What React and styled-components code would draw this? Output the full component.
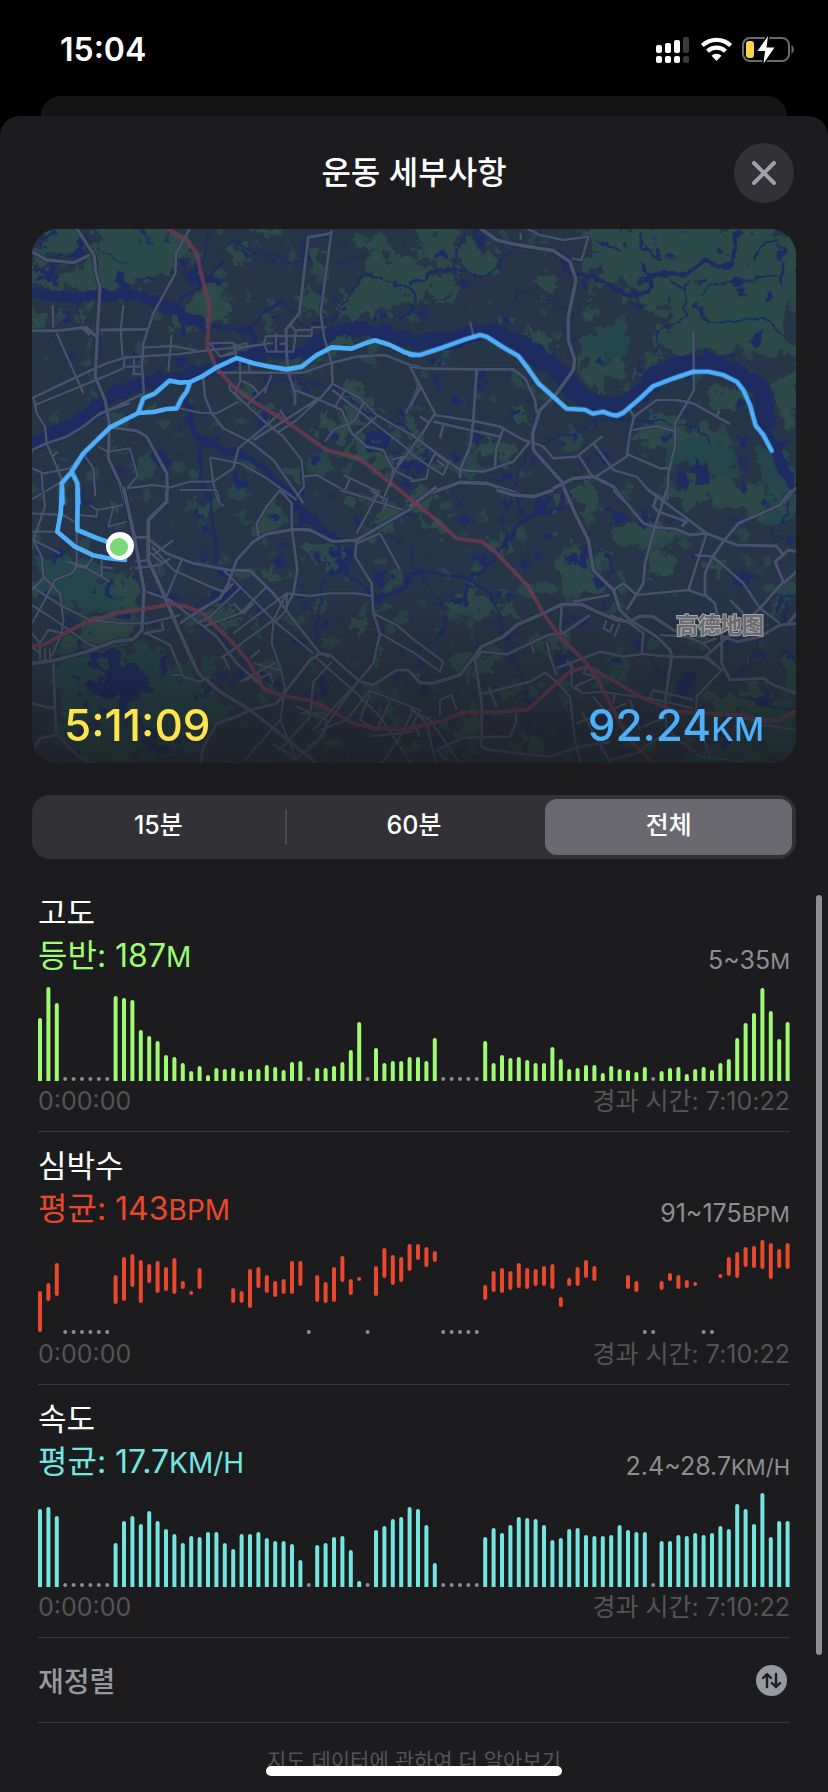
import { useState } from "react";
import styled, { createGlobalStyle } from "styled-components";

const GlobalStyle = createGlobalStyle`
  * {
    box-sizing: border-box;
  }
  body {
    margin: 0;
    background: #000;
    color: #fff;
    font-family: Inter, "Noto Sans CJK KR", sans-serif;
  }
  button {
    padding: 0;
    border: 0;
    color: inherit;
    font: inherit;
    cursor: pointer;
  }
`;

// one value per time slot, 0 = no data
const ELEVATION = [
  63, 94, 78, 0, 0, 0, 0, 0, 0, 85, 83, 81, 51, 45, 40, 26, 24, 18, 10, 15, 6,
  13, 12, 13, 10, 12, 12, 16, 14, 11, 19, 20, 0, 13, 13, 15, 19, 31, 59, 0, 33,
  18, 20, 20, 24, 24, 20, 43, 0, 0, 0, 0, 0, 40, 18, 26, 23, 24, 21, 18, 18, 34,
  22, 12, 13, 16, 16, 8, 15, 12, 11, 9, 14, 0, 10, 13, 14, 7, 12, 14, 11, 18,
  22, 43, 58, 68, 93, 70, 42, 59,
];

const SPEED = [
  78, 80, 71, 0, 0, 0, 0, 0, 0, 44, 66, 71, 63, 76, 66, 58, 53, 44, 51, 50, 55,
  55, 44, 38, 53, 53, 55, 49, 46, 46, 43, 27, 0, 42, 44, 50, 51, 37, 6, 0, 57,
  61, 68, 70, 80, 78, 62, 24, 0, 0, 0, 0, 0, 50, 59, 54, 62, 70, 69, 68, 62, 47,
  49, 58, 59, 52, 51, 51, 52, 62, 57, 55, 55, 0, 46, 46, 52, 51, 54, 52, 54, 61,
  58, 83, 78, 63, 94, 50, 66, 66,
];

// [slot, top, bottom]
const HEART = [
  [0, 51, 92], [1, 43, 61], [2, 23, 56], [9, 35, 64], [10, 17, 61],
  [11, 14, 47], [12, 20, 63], [13, 24, 43], [14, 21, 53], [15, 27, 51],
  [16, 18, 54], [17, 41, 49], [18, 51, 55], [19, 28, 49], [23, 48, 63],
  [24, 51, 63], [25, 29, 68], [26, 27, 48], [27, 35, 53], [28, 41, 57],
  [29, 39, 54], [30, 21, 54], [31, 21, 46], [33, 35, 62], [34, 42, 63],
  [35, 27, 62], [36, 16, 42], [37, 39, 55], [38, 37, 41], [40, 26, 56],
  [41, 8, 38], [42, 15, 45], [43, 17, 42], [44, 4, 31], [45, 4, 20],
  [46, 7, 27], [47, 11, 22], [53, 45, 60], [54, 31, 52], [55, 28, 53],
  [56, 31, 50], [57, 23, 48], [58, 28, 49], [59, 29, 46], [60, 26, 46],
  [61, 24, 49], [62, 57, 67], [63, 38, 46], [64, 27, 46], [65, 20, 38],
  [66, 26, 41], [70, 35, 49], [71, 41, 52], [74, 41, 50], [75, 33, 41],
  [76, 35, 49], [77, 40, 48], [78, 42, 46], [81, 34, 38], [82, 17, 36],
  [83, 12, 38], [84, 7, 27], [85, 6, 28], [86, 0, 29], [87, 3, 39],
  [88, 9, 28], [89, 3, 29],
];

const HEART_GAPS = [
  3, 4, 5, 6, 7, 8, 32, 39, 48, 49, 50, 51, 52, 72, 73, 79, 80,
];

const CHART_HEIGHT = 94;

const fromBase = (values) => ({
  bars: values.flatMap((v, i) =>
    v ? [[i, CHART_HEIGHT - v, CHART_HEIGHT + 4]] : []
  ),
  gaps: values.flatMap((v, i) => (v ? [] : [i])),
});

const METRICS = [
  {
    name: "고도",
    label: "등반: 187",
    unit: "M",
    range: "5~35",
    color: "#9efb73",
    ...fromBase(ELEVATION),
  },
  {
    name: "심박수",
    label: "평균: 143",
    unit: "BPM",
    range: "91~175",
    color: "#ea482d",
    bars: HEART,
    gaps: HEART_GAPS,
  },
  {
    name: "속도",
    label: "평균: 17.7",
    unit: "KM/H",
    range: "2.4~28.7",
    color: "#74e5e1",
    ...fromBase(SPEED),
  },
];

const PERIODS = ["15분", "60분", "전체"];

// The map is cut in four tiles, each with its own 1200x840 grid
const TILES = [
  {
    at: "translate(-12 -9) scale(0.33333)",
    green: [
      "M225 20L440 20L500 70L470 150L400 160L350 205L235 215L235 110Z",
      "M90 30L165 30L205 75L180 120L120 100L60 120L40 95Z",
      "M30 130L110 140L215 130L240 215L30 200Z",
      "M500 240L555 180L625 230L640 300L560 300L480 265Z",
      "M620 80L690 75L685 130L630 115Z",
      "M690 20L790 20L770 60L700 50Z",
      "M600 290L660 300L640 315L590 310Z",
      "M860 100L900 110L910 140L860 150Z",
      "M840 205L905 210L900 270L845 275Z",
      "M960 260L1010 180L1060 160L1200 200L1200 240L1110 260L1100 310L1040 270L980 310Z",
      "M1020 50L1080 60L1110 110L1200 100L1200 200L1100 190L1040 130Z",
      "M930 350L1020 330L1015 370L900 415Z",
      "M180 255L205 280L195 310L175 290Z",
      "M30 270L70 270L60 310L30 325Z",
      "M440 280L480 290L530 320L500 330L460 320Z",
      "M365 540L410 540L405 570L365 570Z",
      "M880 600L940 590L960 560L1000 560L1060 600L980 640L960 660L900 640Z",
      "M960 480L1020 500L1040 540L1090 560L1060 580L980 540Z",
      "M1000 660L1060 690L1110 700L1130 760L1060 740L1000 700L950 705Z",
      "M810 740L850 760L835 800L810 780Z",
      "M690 570L740 560L730 600Z",
      "M720 350L740 400L780 410L730 410L710 380Z",
      "M1110 590L1200 620L1200 650L1130 630Z",
    ],
    teal: [
      "M275 680L300 675L300 700L275 700Z",
      "M110 705L160 705L150 720L110 722Z",
      "M680 215L698 215L698 230L680 230Z",
      "M940 810L970 815L960 830Z",
    ],
    lakes: [
      "M60 130L105 140L100 190L60 180Z",
      "M500 140L570 130L540 200L510 180Z",
      "M1020 640L1070 620L1120 660L1080 690L1020 665Z",
      "M1150 720L1200 690L1200 760L1160 770Z",
      "M510 630L560 650L580 690L530 670Z",
    ],
    rivers: [
      ["M30 220C100 225 130 238 200 230S330 215 400 240S480 290 560 312", 32],
      ["M560 315C620 325 690 320 700 345S690 400 740 415", 14],
      ["M30 668C130 650 190 590 260 540S380 490 500 465S620 430 720 400S800 420 850 395S930 330 990 325S1120 360 1230 368", 42],
      ["M500 520C510 580 500 610 530 640S590 690 650 700S750 760 820 840", 18],
      ["M540 690C530 720 550 780 560 840", 12],
      ["M600 140C640 80 560 190 520 215S480 240 465 260", 8],
      ["M690 330C720 300 760 250 780 245S830 290 850 310S930 310 950 290", 7],
      ["M590 110C620 50 640 60 670 80S740 100 800 120S840 110 850 115", 5],
      ["M940 300C990 220 1010 170 1040 165S1130 200 1165 205S1200 300 1120 290", 6],
      ["M175 250C170 270 180 300 175 315", 4],
      ["M235 90C260 100 290 120 320 130M350 185C390 170 410 160 450 170", 4],
      ["M40 80C60 40 90 50 110 30", 12],
      ["M110 105C140 115 190 110 190 70S180 50 175 30", 6],
      ["M830 500C900 480 960 500 1020 560S1110 580 1180 640", 7],
      ["M570 30C555 60 560 100 545 140", 6],
      ["M940 130C980 120 1010 120 1060 90", 4],
    ],
    roads: [
      ["M36 95L80 120L160 128L210 105M170 25L222 105L228 160L240 200L232 340L226 470L255 540L268 610L265 715L300 790L316 850", 9],
      ["M36 332L110 332L200 322L228 350M210 345L190 325M240 330L384 328", 8],
      ["M98 255L100 325M110 340L190 520M310 255L302 330L308 410", 6],
      ["M510 25L468 100L466 160L400 280L370 370L366 440L372 520L320 545L235 585", 7],
      ["M36 535L150 480L260 430L320 412L480 402L570 390L680 380L740 372", 7],
      ["M45 555L240 475L310 445L315 412M315 440L365 440M342 415L342 462M335 462L365 462", 6],
      ["M365 383L460 378L530 392M455 345L445 455M565 370L640 368L648 400L600 410L570 370", 6],
      ["M600 410L680 380L680 368L640 380M645 370L650 420", 5],
      ["M40 530L50 580L75 620L80 670L110 740L125 780", 6],
      ["M36 690L80 670L140 650L190 620L240 580L330 550", 7],
      ["M36 745L70 760L150 745L190 700M65 760L70 840M36 838L125 785M190 700L220 745L226 830", 6],
      ["M235 680L262 695L330 685L353 768L318 808M36 690L36 700M95 710L115 695", 5],
      ["M270 622L350 632L380 650L440 760L445 850", 9],
      ["M318 805L400 795L450 802L510 785L580 785L640 745L655 685L740 615L780 580", 6],
      ["M935 30L902 280L912 350L935 430L938 490L905 530L780 610L700 660", 7],
      ["M935 40L865 52L838 280L798 328L800 400L805 460L825 520L825 555", 8],
      ["M738 348L875 348L875 322L920 322M738 348L732 370L742 395L820 395L828 335L810 312M768 338L768 395M740 370L760 370M780 372L795 370M830 330L870 330", 6],
      ["M590 458L850 458L930 430L1010 410L1095 405L1170 435L1200 440", 7],
      ["M550 475L555 530L575 580L610 625L690 665L760 720L830 820L850 850", 7],
      ["M480 565L540 578L590 580L655 545M628 490L630 510L740 610L790 650L845 720L852 800L830 830", 6],
      ["M660 410L660 480L700 500L715 520M660 485L645 520L680 555L740 500L755 465M685 430L690 455M740 500L735 520", 6],
      ["M570 712L660 730L740 775L830 840M570 715L580 790L595 850M640 745L655 685", 6],
      ["M825 510L900 540L965 570L995 640L1040 680L1090 690L1120 750L1110 800", 7],
      ["M935 490L1020 535L1070 585L1200 660M938 510L1000 560L1180 700M975 510L945 560M1030 550L1005 600L990 610M1070 590L1000 650M770 640L830 600L905 530M780 570L800 600", 6],
      ["M990 610L940 630L915 665M1200 655L1125 750L1085 850M1130 735L1150 710L1115 720", 6],
      ["M850 770L890 765L970 810L1070 840M970 765L1075 815M990 775L975 810M1060 840L1070 815", 6],
      ["M1170 435L1195 500L1158 580M1120 750L1190 785", 6],
    ],
    rails: ["M440 25L500 60L530 100L548 180L568 250L562 380L590 445L640 500L700 545L800 605L920 690L1010 712L1050 740L1200 860"],
    route: [
      "M1180 405L1150 395L1110 375L1065 361L1035 370L995 386L935 382L890 405L845 440L800 448L750 440L700 430L650 414L590 442L545 470L510 486L480 488L448 482L405 520L370 535L355 577",
      "M510 486L500 515L485 535L470 565L440 567L400 576L355 579L270 622L190 700L155 755L125 790L128 850",
      "M155 755L172 790L175 850",
    ],
  },
  {
    at: "translate(378 -9) scale(0.33333)",
    green: [
      "M140 60L200 80L270 90L240 160L160 160L130 120Z",
      "M30 20L160 20L140 130L60 120L20 80Z",
      "M0 150L100 150L160 190L140 230L40 220L0 240Z",
      "M530 20L1170 20L1170 190L1120 280L1170 420L1060 390L960 400L880 400L760 390L740 340L800 290L700 270L650 210L560 170L500 170L540 110Z",
      "M510 350L560 320L650 310L650 400L610 480L560 530L520 490Z",
      "M700 430L750 410L740 440L680 490L660 500Z",
      "M330 330L400 320L420 390L370 380Z",
      "M400 420L440 400L470 440L440 450Z",
      "M250 300L310 310L290 330L240 320Z",
      "M1100 480L1170 430L1170 560L1130 640L1100 560Z",
      "M860 480L960 490L1000 530L980 580L900 540Z",
      "M700 600L780 590L860 610L960 680L960 740L880 700L760 690L670 660Z",
      "M490 800L560 780L540 840L480 840Z",
      "M290 540L350 560L370 600L320 600Z",
      "M180 620L240 650L320 670L300 720L220 700Z",
      "M0 660L50 640L40 700L0 720Z",
      "M800 800L940 760L1000 800L990 850L800 850Z",
      "M520 265L570 260L570 285L530 285Z",
      "M380 160L440 165L430 200L390 195Z",
    ],
    teal: [
      "M760 650L860 660L980 700L960 780L860 740L760 720Z",
      "M1040 700L1120 700L1160 800L1160 850L1060 850Z",
      "M560 320L650 315L650 400L580 430L520 400Z",
    ],
    lakes: [
      "M270 740L300 750L310 800L260 790Z",
      "M850 690L880 740L890 800L820 780Z",
      "M0 720L40 730L40 770L0 770Z",
      "M60 420L85 400L85 440L60 440Z",
      "M300 570L330 570L330 600L310 600Z",
    ],
    rivers: [
      ["M0 372C60 355 120 370 180 345S260 330 300 360", 48],
      ["M300 360C360 395 410 420 450 460S500 540 560 555S650 560 700 510", 58],
      ["M700 510C750 440 820 435 880 430S980 470 1030 490S1050 560 1065 630", 58],
      ["M1065 620C1090 680 1110 740 1165 820", 28],
      ["M0 195C50 180 50 150 100 145S200 175 235 165S280 110 305 90", 8],
      ["M170 40C150 90 120 110 135 155", 7],
      ["M460 120C460 170 520 155 550 170S600 210 670 222S700 170 740 165S810 180 850 150S870 115 930 140S960 60 990 30", 13],
      ["M830 180C820 220 830 270 825 290S740 310 740 350S740 400 750 410M780 180L830 215", 5],
      ["M870 230C900 180 980 190 1040 175S1110 160 1115 200", 5],
      ["M850 250C890 270 870 300 900 305S980 300 1060 300L1120 350", 6],
      ["M400 670C440 640 490 660 530 620S640 600 720 605S860 600 900 670", 5],
      ["M340 210L400 235L470 275M0 280L130 220", 4],
      ["M350 700C320 760 310 800 320 850", 6],
      ["M1030 120L1060 70L1100 60M1120 130L1110 190M700 40L690 80L750 120", 8],
      ["M560 60L600 75L630 90M490 280L490 300", 6],
    ],
    roads: [
      ["M210 25L260 60L310 72L430 92L480 125L498 180L475 290L475 360L494 420L490 450L440 520L390 570L368 640L370 690L455 785L475 850", 10],
      ["M350 25L390 45L460 60L535 50L515 120L485 115M332 40L332 60M180 305L190 345", 6],
      ["M0 440L40 445L200 448L310 448L345 475L375 540L380 580", 7],
      ["M0 440L75 580L50 620L0 690M30 505L0 560M75 585L200 605L270 620L340 660L360 665M70 605L180 630L270 650M100 615L90 655M30 590L60 610", 7],
      ["M200 448L190 600L180 680L150 750L150 775", 8],
      ["M280 625L258 690L255 740M0 640L80 700L150 750L220 755L310 725L360 665", 7],
      ["M0 700L60 740L100 765L115 730L75 700L55 740M80 720L105 740M0 785L50 775L55 745", 6],
      ["M0 860L60 820L150 787L230 790L350 830L400 820L490 775L550 770L610 800L650 850", 10],
      ["M375 670L400 680L430 715L500 710L578 648M505 705L550 775M550 670L610 750L680 770L715 810L770 840M550 775L650 710L660 640L672 590L660 570", 7],
      ["M672 590L740 540L800 540L850 550L960 612M920 590L928 572M850 335L852 510L830 550L795 610L795 680L775 760L772 840M668 630L740 618L800 635M650 702L750 745L775 745M735 850L740 820", 7],
      ["M1160 800L1120 850", 8],
    ],
    rails: [],
    route: [
      "M0 403L30 405L90 385L160 360L210 345L230 350L280 382L325 408L350 440L385 490L430 530L470 566L525 569L548 581L580 575L600 583L620 587L640 578L690 535L730 498L790 475L850 455L895 455L940 465L980 485L1000 510L1020 555L1037 617L1060 645L1085 692",
    ],
  },
  {
    at: "translate(-12 261) scale(0.33333)",
    green: [
      "M110 440L230 400L290 330L340 360L360 430L290 460L110 480Z",
      "M290 250L350 240L360 350L290 340L270 290Z",
      "M530 30L590 50L570 100L535 90Z",
      "M720 60L790 50L780 120L700 150Z",
      "M860 160L960 150L950 240L880 220Z",
      "M1050 60L1200 30L1180 90L1050 130Z",
      "M740 240L790 240L780 275L730 265Z",
      "M550 330L640 350L650 410L600 400Z",
      "M990 410L1040 410L1030 440L990 430Z",
      "M1050 480L1090 470L1080 510L1050 510Z",
      "M970 30L1020 20L1040 60L980 50Z",
      "M250 30L300 40L290 60L260 60Z",
      "M1150 760L1200 740L1200 790L1160 790Z",
      "M930 740L970 750L960 780L920 770Z",
      "M1080 640L1130 650L1120 690L1080 680Z",
    ],
    teal: [
      "M60 200L140 190L290 260L280 350L190 380L110 330L60 270Z",
      "M110 480L240 470L400 470L480 530L500 570L640 650L560 700L540 810L200 810L110 740Z",
      "M620 80L700 75L690 100L630 95Z",
      "M540 100L560 100L565 125L545 125Z",
      "M1080 330L1110 330L1090 365L1070 360Z",
      "M530 375L555 380L545 400L530 395Z",
      "M675 375L700 370L710 400L690 415L670 400Z",
      "M540 510L600 520L590 560L540 550Z",
      "M750 770L800 770L810 800L770 810Z",
    ],
    lakes: [
      "M220 490L300 480L330 520L390 540L380 600L340 640L350 700L290 660L270 610L210 620L190 580L270 560Z",
      "M340 680L390 700L440 790L400 800L350 750Z",
      "M240 280L280 280L275 310L245 310Z",
      "M890 570L910 570L915 630L890 620Z",
      "M940 180L985 170L990 250L940 240Z",
      "M200 690L250 700L240 740L200 720Z",
      "M530 590L545 600L550 640L535 640Z",
      "M630 280L655 280L650 320L630 310Z",
    ],
    rivers: [
      ["M800 0C830 50 850 80 880 100S940 140 955 160", 22],
      ["M960 140C950 200 960 240 1000 270S1060 320 1100 315S1150 300 1160 260", 12],
      ["M575 0C560 60 590 140 590 200S610 240 640 280S600 320 550 350", 9],
      ["M910 260C910 330 890 370 885 440L880 490", 6],
      ["M590 400C610 440 630 480 660 510S620 560 640 590", 6],
      ["M1160 280L1200 240", 8],
    ],
    roads: [
      ["M310 -10L345 150L372 300L366 420L340 448L280 455L200 485L100 512L36 520", 10],
      ["M440 0L440 35L385 90L385 210L430 310L480 430L535 550L600 605L690 660L760 715L890 820", 11],
      ["M345 142L380 142L440 190L520 220L625 240L690 242L760 310L840 415L900 490L930 495L1020 575L1060 585L1130 540L1160 540L1200 560", 8],
      ["M380 305L450 330L500 370L590 440L650 520L740 600", 7],
      ["M480 400L540 360L600 325L625 280L650 210L700 155L740 132L820 118L870 120L940 155L1010 150L1200 40", 9],
      ["M400 195L460 150M395 170L460 240L570 290L610 305M485 210L440 320M380 180L430 220M345 235L420 225L450 205M345 215L390 210", 6],
      ["M610 240L760 390L880 490M740 290L660 370L550 410M640 280L600 320M665 290L570 380L530 400M800 310L640 430M800 310L760 390L610 500L630 540M640 340L670 370L700 340", 6],
      ["M800 310L870 318L930 310L1010 310L1055 318M800 310L800 360L760 400L755 460L780 530L795 590L780 700", 6],
      ["M780 0L740 50L710 100L715 140M780 0L815 40L815 110L832 240L820 310L800 350", 7],
      ["M1010 150L1005 200L1055 280L1060 370L1080 430L1060 520L1010 580L930 690L890 760L820 810", 7],
      ["M1080 130L1140 240M1060 370L1130 405L1200 465M1080 430L1200 500M1010 160L1080 130", 6],
      ["M1010 130L1080 0M960 0L1150 60M1050 0L1100 30L1090 60", 6],
      ["M480 0L590 0L600 40L612 48M210 45L230 60L310 45M230 55L230 80L180 75M280 50L265 110L320 95", 5],
      ["M36 70L130 75L170 100L170 230L155 250L105 270L85 310L36 400M36 125L110 125M70 0L75 50L40 150L65 200L70 260L120 310L130 390L125 430L95 500", 6],
      ["M36 290L120 345L210 390L310 400L380 400L480 375M36 345L90 380L210 465L230 470M36 300L70 265M40 150L120 190M220 200L200 230L140 215M245 190L245 260M160 225L200 235L270 275M240 230L280 235", 6],
      ["M36 470L60 490M36 430L60 460L85 420L130 430M60 460L60 510M75 475L75 510M90 475L90 510", 6],
      ["M380 430L450 465L490 560L540 575L570 560M370 430L430 420L425 395M455 555L490 555", 7],
      ["M100 520L108 730L170 795L225 830M36 640L80 652L105 652M40 780L60 745L105 735", 7],
      ["M540 830L550 770L590 700L650 680L690 660L770 640L800 600L870 510L900 490L930 500", 9],
      ["M600 505L640 480M660 575L770 515M700 520L780 540M690 505L720 480M700 575L750 550L760 580M715 550L725 585M665 575L700 560", 6],
      ["M885 500L1010 610L1080 680L1180 830M935 515L880 575L870 680L780 780L760 760M1000 590L880 720M1050 600L980 690L900 720M1045 600L1200 660L1180 700L1200 740M1110 635L1070 720L1020 690L1050 610", 6],
      ["M830 650L920 690L910 740L860 770M780 690L830 810M840 670L920 670M1050 740L1180 725M670 815L780 690M770 770L820 800M1080 830L1140 740L1180 660", 6],
    ],
    rails: ["M36 468L70 465L130 432L200 395L290 370L380 355L460 342L500 350L545 368L640 460L690 520L730 598L790 618L870 632L930 660L1000 700L1060 715L1150 718L1200 710"],
    route: [
      "M126 0L122 70L112 125L165 170L220 196L260 204L315 210",
      "M173 0L172 120L230 144L290 165",
    ],
  },
  {
    at: "translate(378 261) scale(0.33333)",
    green: [
      "M430 0L560 0L560 50L430 50Z",
      "M0 0L100 0L60 50L0 60Z",
      "M420 210L490 180L560 170L600 250L560 310L480 300L430 250Z",
      "M600 110L700 90L720 60L800 160L700 170L600 150Z",
      "M720 200L780 190L770 240L710 280Z",
      "M110 340L210 320L270 360L240 390L130 380Z",
      "M280 340L330 330L320 390L280 380Z",
      "M150 270L200 280L190 310L160 300Z",
      "M200 490L250 500L240 550L200 550Z",
      "M940 0L1170 0L1170 40L1100 80L980 60Z",
      "M890 200L940 230L930 260L900 240Z",
      "M430 450L480 450L470 500L430 480Z",
      "M1000 490L1060 480L1050 520L1000 520Z",
      "M880 620L1000 590L1090 610L1090 660L900 670Z",
      "M150 670L210 680L200 740L150 740Z",
      "M320 740L380 745L380 800L300 800Z",
      "M130 500L190 490L180 560L130 550Z",
      "M1090 330L1130 340L1110 370L1090 360Z",
      "M260 150L300 120L290 180L260 190Z",
      "M20 60L120 90L110 120L60 110Z",
    ],
    teal: [
      "M540 540L640 515L640 560L580 580Z",
      "M1060 60L1130 60L1130 90L1080 100Z",
      "M1030 650L1170 640L1170 830L820 830L850 780L960 740Z",
      "M480 620L510 620L505 645L485 640Z",
      "M150 780L210 780L210 810L160 810Z",
    ],
    lakes: [
      "M820 540L850 545L845 590L820 580Z",
      "M600 70L615 60L640 70L640 90L620 95L600 85Z",
      "M120 310L180 300L170 335L130 330Z",
      "M1110 480L1150 470L1150 510L1110 500Z",
      "M450 200L475 195L475 215L455 215Z",
      "M270 70L295 60L290 100L275 100Z",
      "M370 70L420 65L410 90L370 90Z",
    ],
    rivers: [
      ["M0 245C60 250 140 250 190 275S270 360 275 420S340 540 355 620S350 730 345 790", 8],
      ["M190 270C220 230 270 190 290 160S320 100 350 85S420 60 470 60", 9],
      ["M330 80L325 30M290 60L285 0", 6],
      ["M560 180C600 170 600 220 600 260", 5],
      ["M40 260C70 320 110 350 110 400S50 450 20 500M0 180L20 240", 5],
      ["M1160 310C1110 320 1100 350 1090 380S1040 450 1030 500S960 540 950 570", 6],
      ["M1130 30L1130 80L1090 120L1100 160", 6],
      ["M1090 360L1120 330L1130 360L1110 400", 5],
      ["M700 490C740 520 740 560 720 580", 4],
      ["M960 600C1000 620 1040 640 1100 660L1160 650", 6],
    ],
    roads: [
      ["M0 50L80 -10M260 0L310 15L370 20L430 0M460 -10L500 80L535 150L550 240L610 300L630 360L660 390", 10],
      ["M0 545L30 578L70 580L150 555L215 470L280 440L320 405L400 370L455 343L515 343L560 365L620 390L660 395L690 378L730 380L790 420L870 440", 10],
      ["M610 0L650 40L700 100L740 112L800 118L840 135L890 130M715 0L830 85L890 130L980 165L1100 168L1120 195L1135 180L1160 185M1120 195L1095 215L1120 275L1045 360L920 470L885 500", 8],
      ["M740 20L730 50L745 65L830 95L815 110M770 0L735 110L705 220L700 280L650 360M1145 0L1110 45L985 100L940 155L905 205L885 250L885 315L915 340L935 440L935 520L960 570L1060 565L1090 585L1160 610", 8],
      ["M890 130L835 300L680 315L640 280L610 300M835 300L885 318M855 195L910 200L1000 280L1050 355L1110 400M960 330L1000 370M980 350L985 345M600 315L490 335", 7],
      ["M1160 400L1110 405L1050 440L980 455L940 440M1160 245L1120 280M1160 370L1130 405", 8],
      ["M660 390L740 440L780 480L785 500L770 600L765 650", 9],
      ["M540 375L460 430L415 435L290 493L215 485L195 510L215 640L215 770L240 780L420 800L510 770L600 755", 8],
      ["M455 350L450 420L470 440M410 455L420 500L440 555M440 535L570 485L640 500L700 492L780 500L885 502L935 540M695 490L700 430L660 400L600 375M750 435L830 440L880 460L920 445", 7],
      ["M365 465L372 490M590 390L580 415L600 425L610 400M630 400L612 440", 6],
      ["M215 612L360 575L405 548L440 575L480 620L495 750L520 850M160 743L300 740L318 700L318 670M235 590L260 650", 7],
      ["M90 630L125 615L140 660M90 630L90 680M0 650L50 700L80 830M0 660L60 690L150 820M160 743L80 780L110 810M50 690L60 680", 6],
      ["M485 520L485 590L520 610L570 605L720 625L850 655M520 610L495 590L560 560L580 605M470 510L490 540M560 560L520 550L530 530M600 680L550 620M690 720L660 630M610 640L615 610", 6],
      ["M890 500L935 540L860 620L858 660L880 740L900 800M720 625L730 600L850 630M765 650L770 720L870 800L1000 815M500 700L650 640M515 665L620 850M700 710L770 680M570 770L600 810M880 460L900 480", 6],
      ["M0 440L100 515L90 545L0 480", 6],
      ["M990 680L1060 705L1160 720M600 810L680 790L750 740", 7],
    ],
    rails: [
      "M0 28L60 75L140 145L215 155L255 185L355 290L400 370L450 440L530 520L570 580L610 660L660 750L730 820",
      "M0 715L90 695L160 667L260 667L355 658L440 580L480 545L530 530L600 565L700 625L800 665L990 675L1060 692L1110 690L1160 660",
    ],
    route: [],
  },
];

const ActivityMap = () => (
  <MapArt
    viewBox="0 0 764 534"
    preserveAspectRatio="xMidYMid slice"
    aria-hidden="true"
  >
    <defs>
      <filter
        id="land"
        x="-5%" y="-5%" width="110%" height="110%"
        colorInterpolationFilters="sRGB"
      >
        <feTurbulence
          type="fractalNoise"
          baseFrequency="0.06"
          numOctaves="4"
          seed="7"
        />
        <feDisplacementMap
          in="SourceGraphic"
          scale="38"
          xChannelSelector="R"
          yChannelSelector="G"
        />
      </filter>
      <filter
        id="shore"
        x="-5%" y="-5%" width="110%" height="110%"
        colorInterpolationFilters="sRGB"
      >
        <feTurbulence
          type="fractalNoise"
          baseFrequency="0.08"
          numOctaves="3"
          seed="3"
        />
        <feDisplacementMap
          in="SourceGraphic"
          scale="10"
          xChannelSelector="R"
          yChannelSelector="G"
        />
      </filter>
      {/* small ponds and woods scattered over the land */}
      <filter
        id="ponds"
        x="0" y="0" width="100%" height="100%"
        colorInterpolationFilters="sRGB"
      >
        <feTurbulence
          type="fractalNoise"
          baseFrequency="0.05"
          numOctaves="4"
          seed="12"
        />
        <feColorMatrix values="0 0 0 0 0.11  0 0 0 0 0.17  0 0 0 0 0.38  14 0 0 0 -9.6" />
      </filter>
      <filter
        id="woods"
        x="0" y="0" width="100%" height="100%"
        colorInterpolationFilters="sRGB"
      >
        <feTurbulence
          type="fractalNoise"
          baseFrequency="0.04"
          numOctaves="4"
          seed="31"
        />
        <feColorMatrix values="0 0 0 0 0.16  0 0 0 0 0.28  0 0 0 0 0.29  14 0 0 0 -8.9" />
      </filter>
      <linearGradient id="fade" x1="0" y1="0" x2="0" y2="1">
        <stop offset="0" stopColor="#1c1c1e" stopOpacity="0" />
        <stop offset="1" stopColor="#1c1c1e" stopOpacity="0.7" />
      </linearGradient>
    </defs>
    <rect width="764" height="534" fill="#273549" />
    <rect width="764" height="534" filter="url(#woods)" />
    <g filter="url(#land)">
      {TILES.map((tile) => (
        <g key={tile.at} transform={tile.at}>
          <path d={tile.green.join("")} fill="#2d4a4a" />
          <path d={tile.teal.join("")} fill="#23474d" />
          <path d={tile.lakes.join("")} fill="#1c2b60" />
        </g>
      ))}
    </g>
    <rect width="764" height="534" filter="url(#ponds)" />
    <g filter="url(#shore)" fill="none" stroke="#1c2b60">
      {TILES.map((tile) => (
        <g key={tile.at} transform={tile.at}>
          {tile.rivers.map(([d, width]) => (
            <path key={d} d={d} strokeWidth={width} />
          ))}
        </g>
      ))}
    </g>
    <g fill="none" strokeLinejoin="round">
      {TILES.map((tile) => (
        <g key={tile.at} transform={tile.at}>
          {tile.roads.map(([d, width]) => (
            <path
              key={d}
              d={d}
              stroke="#222d40"
              strokeWidth={width > 8 ? width + 6 : width + 3}
            />
          ))}
          {tile.roads.map(([d, width]) => (
            <path key={d} d={d} stroke="#47536e" strokeWidth={width + 1} />
          ))}
        </g>
      ))}
      {TILES.map((tile) => (
        <g key={tile.at} transform={tile.at}>
          {tile.rails.map((d) => (
            <g key={d}>
              <path d={d} stroke="#733f54" strokeWidth="11" opacity="0.85" />
              <path d={d} stroke="#57304a" strokeWidth="2" />
            </g>
          ))}
        </g>
      ))}
    </g>
    <rect y="364" width="764" height="170" fill="url(#fade)" />
    <g fill="none" stroke="#4fb0fa" strokeLinecap="round" strokeLinejoin="round">
      {TILES.map((tile) => (
        <g key={tile.at} transform={tile.at}>
          {tile.route.map((d) => (
            <path key={d} d={d} strokeWidth="14" />
          ))}
        </g>
      ))}
    </g>
    <circle cx="88" cy="317" r="14" fill="#fff" />
    <circle cx="87" cy="318" r="9" fill="#78d975" />
  </MapArt>
);

const StatusIcons = () => (
  <svg width="140" height="28" viewBox="0 0 140 28" aria-hidden="true">
    <g fill="#fff">
      <rect x="1" y="9" width="6" height="8" rx="2" />
      <rect x="10" y="7" width="6" height="10" rx="2" />
      <rect x="19" y="4" width="6" height="13" rx="2" />
      <rect x="28" y="1" width="6" height="16" rx="2" fill="#3a3a3c" />
      <rect x="1" y="20" width="6" height="7" rx="2" />
      <rect x="10" y="20" width="6" height="7" rx="2" />
      <rect x="19" y="20" width="6" height="7" rx="2" />
      <rect x="28" y="20" width="6" height="7" rx="2" fill="#3a3a3c" />
      <path d="M61.500 25l-5-5.200a7.200 7.200 0 0 1 10 0z" />
    </g>
    <g fill="none" stroke="#fff" strokeWidth="4.200">
      <path d="M47.300 9.500a20.500 20.500 0 0 1 28.400 0" />
      <path d="M52.500 15.300a13 13 0 0 1 18 0" />
    </g>
    <rect
      x="88" y="2" width="46" height="23" rx="7"
      fill="none" stroke="#6b6b6e" strokeWidth="2"
    />
    <path d="M136.500 9.500c3 1 3 7 0 8z" fill="#6b6b6e" />
    <rect x="91" y="5" width="8" height="17" rx="3" fill="#f7d64a" />
    <path
      d="M113 0L102.500 15H110L108.500 27.500L119.500 11.500H111.500Z"
      fill="#fff" stroke="#000" strokeWidth="3" paintOrder="stroke"
      strokeLinejoin="round"
    />
  </svg>
);

const Chart = ({ bars, gaps, color, name }) => (
  <ChartArt viewBox={`0 0 752 ${CHART_HEIGHT}`} role="img" aria-label={name}>
    {bars.map(([slot, top, bottom]) => (
      <rect
        key={slot}
        x={slot * 8.4}
        y={top}
        width="4"
        height={bottom - top}
        rx="2"
        fill={color}
      />
    ))}
    {gaps.map((slot) => (
      <circle key={slot} cx={slot * 8.4 + 2} cy="92" r="2" fill="#8e8e90" />
    ))}
  </ChartArt>
);

const Metric = ({ name, label, unit, range, color, bars, gaps }) => (
  <Panel>
    <PanelTitle>{name}</PanelTitle>
    <Summary>
      <Value $color={color}>
        {label}
        <Unit $size={28}>{unit}</Unit>
      </Value>
      <Range>
        {range}
        <Unit $size={22}>{unit}</Unit>
      </Range>
    </Summary>
    <Chart bars={bars} gaps={gaps} color={color} name={name} />
    <Axis>
      <span>0:00:00</span>
      <span>경과 시간: 7:10:22</span>
    </Axis>
  </Panel>
);

const App = () => {
  const [period, setPeriod] = useState("전체");

  return (
    <Screen>
      <GlobalStyle />
      <StatusBar>
        <Clock>15:04</Clock>
        <StatusIcons />
      </StatusBar>
      <BackSheet />
      <Sheet>
        <Header>
          <Title>운동 세부사항</Title>
          <CloseButton aria-label="닫기">
            <svg width="24" height="24" viewBox="0 0 24 24" aria-hidden="true">
              <path
                d="M2 2L22 22M22 2L2 22"
                stroke="#a0a0a7"
                strokeWidth="4"
                strokeLinecap="round"
              />
            </svg>
          </CloseButton>
        </Header>
        <MapCard>
          <ActivityMap />
          <Watermark>高德地图</Watermark>
          <MapStats>
            <Stat $color="#fbe74d">5:11:09</Stat>
            <Stat $color="#4fb0fa">
              92.24<Unit $size={33}>KM</Unit>
            </Stat>
          </MapStats>
        </MapCard>
        <Segments>
          {PERIODS.map((p) => (
            <Segment
              key={p}
              $active={p === period}
              aria-pressed={p === period}
              onClick={() => setPeriod(p)}
            >
              {p}
            </Segment>
          ))}
        </Segments>
        <Metrics>
          {METRICS.map((metric) => (
            <Metric key={metric.name} {...metric} />
          ))}
          <ScrollThumb />
        </Metrics>
        <ReorderButton>
          재정렬
          <svg width="31" height="31" viewBox="0 0 31 31" aria-hidden="true">
            <circle cx="15.500" cy="15.500" r="15.500" fill="#98989f" />
            <path
              d="M11 22V9.500M7 13L11 9L15 13M20 9V21.500M16 18L20 22L24 18"
              fill="none"
              stroke="#1c1c1e"
              strokeWidth="2.400"
              strokeLinecap="round"
              strokeLinejoin="round"
            />
          </svg>
        </ReorderButton>
        <MapLink href="#map-data">지도 데이터에 관하여 더 알아보기</MapLink>
      </Sheet>
      <HomeIndicator />
    </Screen>
  );
};

const Screen = styled.div`
  position: relative;
  display: flex;
  flex-direction: column;
  min-height: 100vh;
  overflow: hidden;
`;

const StatusBar = styled.div`
  display: flex;
  align-items: center;
  justify-content: space-between;
  height: 96px;
  padding: 4px 33px 0 60px;
`;

const Clock = styled.span`
  font-size: 32px;
  font-weight: 600;
  line-height: 40px;
`;

const BackSheet = styled.div`
  height: 20px;
  margin: 0 41px;
  border-radius: 20px 20px 0 0;
  background: #141414;
`;

const Sheet = styled.main`
  display: flex;
  flex: 1;
  flex-direction: column;
  border-radius: 20px 20px 0 0;
  background: #1c1c1e;
`;

const Header = styled.header`
  display: grid;
  grid-template-columns: 60px 1fr 60px;
  align-items: center;
  padding: 27px 34px 26px;
`;

const Title = styled.h1`
  grid-column: 2;
  margin: 0;
  font-size: 32px;
  font-weight: 500;
  line-height: 40px;
  text-align: center;
`;

const CloseButton = styled.button`
  display: flex;
  align-items: center;
  justify-content: center;
  height: 60px;
  border-radius: 50%;
  background: #323136;
`;

const MapCard = styled.section`
  position: relative;
  display: flex;
  margin: 0 32px;
  border-radius: 26px;
  overflow: hidden;
`;

const MapArt = styled.svg`
  display: block;
  width: 100%;
  height: 534px;
`;

const Watermark = styled.span`
  position: absolute;
  right: 32px;
  bottom: 124px;
  color: #6c6a6c;
  font-family: "Noto Sans CJK SC", sans-serif;
  font-size: 22px;
  font-weight: 700;
  line-height: 32px;
  -webkit-text-stroke: 2px #a3a5ac;
  paint-order: stroke;
`;

const MapStats = styled.div`
  position: absolute;
  right: 32px;
  bottom: 8px;
  left: 32px;
  display: flex;
  align-items: baseline;
  justify-content: space-between;
`;

const Stat = styled.span`
  color: ${({ $color }) => $color};
  font-size: 44px;
  font-weight: 500;
  line-height: 52px;
`;

const Unit = styled.span`
  font-size: ${({ $size }) => $size}px;
`;

const Segments = styled.div`
  display: grid;
  grid-template-rows: 64px;
  grid-template-columns: repeat(3, 1fr);
  margin: 32px 32px 0;
  border-radius: 18px;
  background: #323136;
`;

const Segment = styled.button`
  margin: ${({ $active }) => ($active ? "4px" : "14px 0")};
  padding-bottom: 4px;
  border-radius: ${({ $active }) => ($active ? "12px" : "0")};
  background: ${({ $active }) => ($active ? "#6a696f" : "none")};
  font-size: 25px;
  font-weight: 500;
  line-height: 32px;

  &:first-child:not([aria-pressed="true"]) {
    border-right: 2px solid #4b4a50;
  }
`;

const Metrics = styled.div`
  position: relative;
  margin-top: 20px;
`;

const Panel = styled.section`
  margin: 0 38px;
  padding: 13px 0 12px;
  border-bottom: 1px solid #3a3a3c;
`;

const PanelTitle = styled.h2`
  margin: 0;
  font-size: 31px;
  font-weight: 400;
  line-height: 42px;
`;

const Summary = styled.div`
  display: flex;
  align-items: flex-end;
  justify-content: space-between;
  height: 44px;
`;

const Value = styled.span`
  color: ${({ $color }) => $color};
  font-size: 32px;
  line-height: 42px;
`;

const Range = styled.span`
  color: #8e8e90;
  font-size: 25px;
  line-height: 34px;
`;

const ChartArt = styled.svg`
  display: block;
  width: 100%;
  margin-top: 9px;
`;

const Axis = styled.div`
  display: flex;
  justify-content: space-between;
  margin-top: 2px;
  color: #545456;
  font-size: 25px;
  line-height: 36px;
`;

const ScrollThumb = styled.div`
  position: absolute;
  top: 16px;
  right: 6px;
  width: 6px;
  height: 760px;
  border-radius: 3px;
  background: #8e8e90;
`;

const ReorderButton = styled.button`
  display: flex;
  align-items: center;
  justify-content: space-between;
  height: 85px;
  margin: 0 38px;
  padding-right: 3px;
  border-bottom: 1px solid #3a3a3c;
  background: none;
  color: #98989f;
  font-size: 28px;
  font-weight: 500;
`;

const MapLink = styled.a`
  margin-top: 22px;
  color: #545456;
  font-size: 21px;
  line-height: 32px;
  text-align: center;
  text-decoration: none;
`;

const HomeIndicator = styled.div`
  position: absolute;
  bottom: 16px;
  left: 50%;
  width: 296px;
  height: 10px;
  margin-left: -148px;
  border-radius: 5px;
  background: #fff;
`;

export default App;
